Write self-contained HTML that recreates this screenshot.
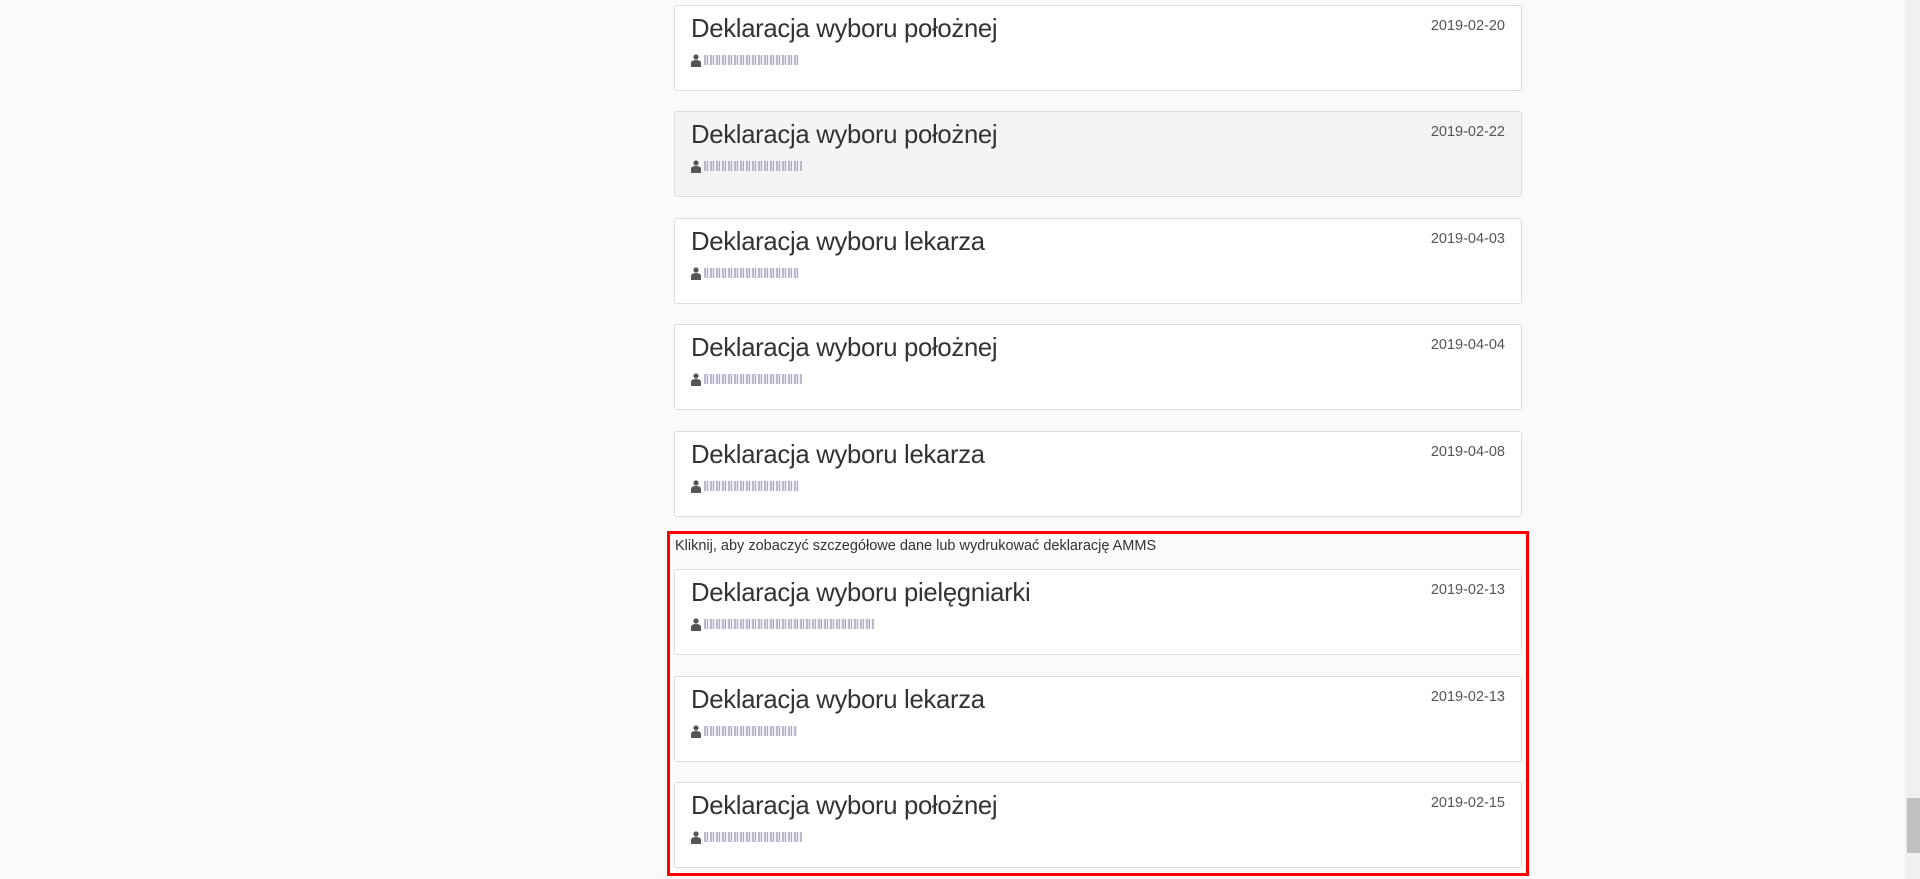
<!DOCTYPE html>
<html><head><meta charset="utf-8"><style>
html,body{margin:0;padding:0;}
body{width:1920px;height:879px;background:#fafafa;position:relative;overflow:hidden;font-family:"Liberation Sans",sans-serif;color:#333;}
.card{position:absolute;left:674px;width:846px;height:84px;background:#fff;border:1px solid #ddd;border-radius:3px;}
.card.h{background:#f4f4f4;}
.t{position:absolute;left:16px;top:9px;font-size:25.7px;color:#333;letter-spacing:-0.3px;}
.d{position:absolute;right:16px;top:12px;font-size:14.5px;color:#555;}
.n{position:absolute;left:16px;top:47px;height:14px;display:flex;align-items:center;}
.n span{display:inline-block;height:10px;margin-left:3px;background:repeating-linear-gradient(90deg,#aab 0 2px,#dde 2px 3px,#999 3px 4px,#eef 4px 6px);opacity:.8}
.red{position:absolute;left:667px;top:531px;width:856px;height:339px;border:3px solid #f00;}
.cap{position:absolute;left:675px;top:538px;font-size:14.5px;color:#333;}
.sb{position:absolute;left:1905px;top:0;width:15px;height:879px;background:#f0f0f0;}
.th{position:absolute;left:1907px;top:798px;width:13px;height:55px;background:#c0c0c0;}
</style></head><body>
<div class="card" style="top:5px"><div class="t">Deklaracja wyboru położnej</div><div class="d">2019-02-20</div><div class="n"><svg width="10" height="13" viewBox="0 0 10 13"><circle cx="5" cy="3" r="2.6" fill="#555"/><path d="M0 13V9q0-3 5-3t5 3v4z" fill="#555"/></svg><span style="width:95px"></span></div></div>
<div class="card h" style="top:111px"><div class="t">Deklaracja wyboru położnej</div><div class="d">2019-02-22</div><div class="n"><svg width="10" height="13" viewBox="0 0 10 13"><circle cx="5" cy="3" r="2.6" fill="#555"/><path d="M0 13V9q0-3 5-3t5 3v4z" fill="#555"/></svg><span style="width:98px"></span></div></div>
<div class="card" style="top:218px"><div class="t">Deklaracja wyboru lekarza</div><div class="d">2019-04-03</div><div class="n"><svg width="10" height="13" viewBox="0 0 10 13"><circle cx="5" cy="3" r="2.6" fill="#555"/><path d="M0 13V9q0-3 5-3t5 3v4z" fill="#555"/></svg><span style="width:95px"></span></div></div>
<div class="card" style="top:324px"><div class="t">Deklaracja wyboru położnej</div><div class="d">2019-04-04</div><div class="n"><svg width="10" height="13" viewBox="0 0 10 13"><circle cx="5" cy="3" r="2.6" fill="#555"/><path d="M0 13V9q0-3 5-3t5 3v4z" fill="#555"/></svg><span style="width:98px"></span></div></div>
<div class="card" style="top:431px"><div class="t">Deklaracja wyboru lekarza</div><div class="d">2019-04-08</div><div class="n"><svg width="10" height="13" viewBox="0 0 10 13"><circle cx="5" cy="3" r="2.6" fill="#555"/><path d="M0 13V9q0-3 5-3t5 3v4z" fill="#555"/></svg><span style="width:95px"></span></div></div>
<div class="red"></div>
<div class="cap">Kliknij, aby zobaczyć szczegółowe dane lub wydrukować deklarację AMMS</div>
<div class="card" style="top:569px"><div class="t">Deklaracja wyboru pielęgniarki</div><div class="d">2019-02-13</div><div class="n"><svg width="10" height="13" viewBox="0 0 10 13"><circle cx="5" cy="3" r="2.6" fill="#555"/><path d="M0 13V9q0-3 5-3t5 3v4z" fill="#555"/></svg><span style="width:170px"></span></div></div>
<div class="card" style="top:676px"><div class="t">Deklaracja wyboru lekarza</div><div class="d">2019-02-13</div><div class="n"><svg width="10" height="13" viewBox="0 0 10 13"><circle cx="5" cy="3" r="2.6" fill="#555"/><path d="M0 13V9q0-3 5-3t5 3v4z" fill="#555"/></svg><span style="width:93px"></span></div></div>
<div class="card" style="top:782px"><div class="t">Deklaracja wyboru położnej</div><div class="d">2019-02-15</div><div class="n"><svg width="10" height="13" viewBox="0 0 10 13"><circle cx="5" cy="3" r="2.6" fill="#555"/><path d="M0 13V9q0-3 5-3t5 3v4z" fill="#555"/></svg><span style="width:98px"></span></div></div>
<div class="sb"></div><div class="th"></div>
</body></html>
